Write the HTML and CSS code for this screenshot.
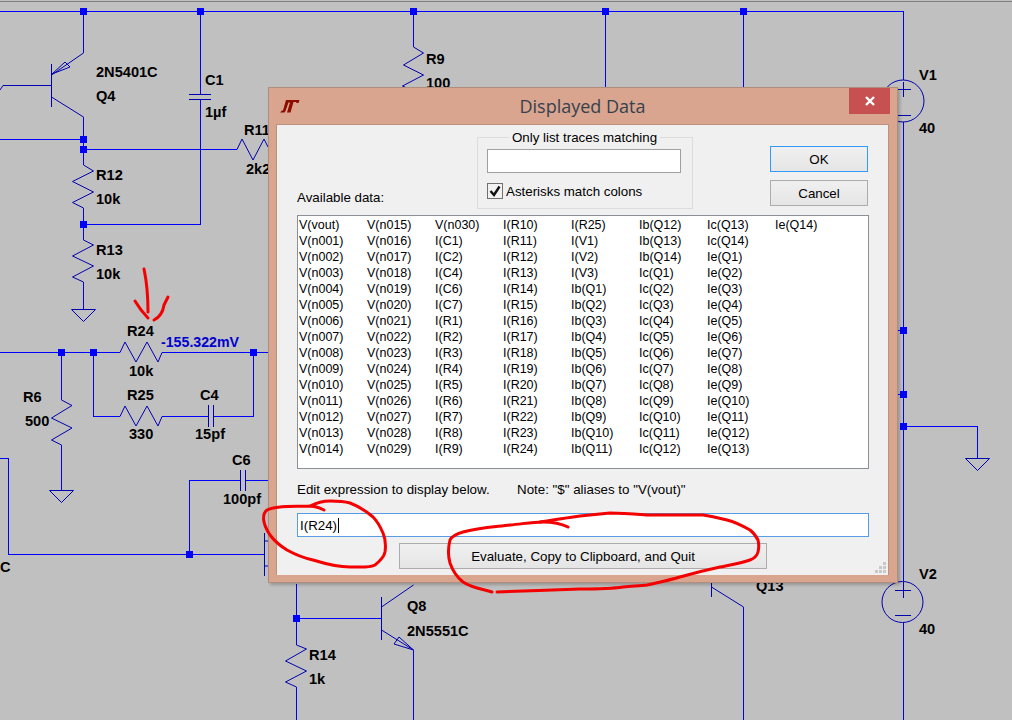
FILE: index.html
```html
<!DOCTYPE html>
<html lang="en">
<head>
<meta charset="utf-8">
<title>Displayed Data</title>
<link rel="stylesheet" href="styles.css">
</head>
<body>
<div class="desktop">
  <svg class="schematic" viewBox="0 0 1012 720" width="1012" height="720" aria-label="Circuit schematic">
    <g class="wires">
      <path d="M0 11.5H903.5V80M903.5 122V581M903.5 622V720"/>
      <path d="M83.5 11.5V53M83.5 117V149.5V165M0 139.5H83.5M83.5 149.5H237"/>
      <path d="M200.5 11.5V94M200.5 99V224.5H83.5M83.5 208V240M83.5 282V309"/>
      <path d="M413.5 11.5V47M605.5 11.5V87M743.5 11.5V87"/>
      <path d="M0 352.5H120M162 352.5H268M61.5 352.5V400M61.5 445V490"/>
      <path d="M93.5 352.5V416.5H120M162 416.5H208M213 416.5H253.5V352.5"/>
      <path d="M0 458.5H8.5V554.5H264M189.5 554.5V480.5H240M245 480.5H268"/>
      <path d="M296.5 584V645M296.5 687V720M296.5 618.5H381M413.5 650V720M743.5 607V720"/>
      <path d="M903.5 426.5H977.5V458M898 330.5H903M898 394.5H903"/>
    </g>
    <g class="junctions">
      <rect x="80" y="8" width="7" height="7"/><rect x="197" y="8" width="7" height="7"/>
      <rect x="410" y="8" width="7" height="7"/><rect x="602" y="8" width="7" height="7"/>
      <rect x="740" y="8" width="7" height="7"/><rect x="80" y="136" width="7" height="7"/>
      <rect x="80" y="146" width="7" height="7"/><rect x="80" y="221" width="7" height="7"/>
      <rect x="58" y="349" width="7" height="7"/><rect x="90" y="349" width="7" height="7"/>
      <rect x="250" y="349" width="7" height="7"/><rect x="186" y="551" width="7" height="7"/>
      <rect x="293" y="615" width="7" height="7"/><rect x="900" y="327" width="7" height="7"/>
      <rect x="900" y="391" width="7" height="7"/><rect x="900" y="423" width="7" height="7"/>
    </g>
    <g class="parts">
      <path d="M51.5 64V107M0 90L3 85.5H51.5M51.5 75L83.5 53M51.5 97L83.5 117"/>
      <path d="M52 74L70 67L65 62Z"/>
      <path d="M189 94.5H211M189 99.5H211"/>
      <path d="M83.5 165L93.5 171L72.5 181.5L93.5 192L72.5 202.5L83.5 208"/>
      <path d="M83.5 240L93.5 245L72.5 256L93.5 266L72.5 277L83.5 282"/>
      <path d="M71.5 309.5H95.5L83.5 321.5Z"/>
      <path d="M237 149.5L242 139L253 160L264 139L268 147"/>
      <path d="M413.5 47L423.5 53L403.5 65L423.5 75L402.5 86L413 91"/>
      <path d="M120 352.5L125 342L136 362L147 342L158 362L162 352.5"/>
      <path d="M120 416.5L125 406L136 426L147 406L158 426L162 416.5"/>
      <path d="M208.5 405V427M213.5 405V427"/>
      <path d="M61.5 400L72 405.5L51.5 418L72 428L51.5 440L61.5 445"/>
      <path d="M49.5 490.5H73.5L61.5 502.5Z"/>
      <path d="M240.5 470V491M245.5 470V491"/>
      <path d="M264.5 533V576M264.5 541H268M264.5 566H268"/>
      <path d="M381.5 597V640M381.5 607L413.5 585M381.5 630L413.5 650M413.5 650L394 644L399 637Z"/>
      <path d="M296.5 645L306.5 649L285.5 661L306.5 671L285.5 682L296.5 687"/>
      <path d="M711.5 583V597M711.5 587L743.5 607"/>
      <circle cx="903" cy="101" r="21"/>
      <path d="M895 89.5H911M895 115.5H911M903.5 82V97"/>
      <circle cx="902.5" cy="602" r="20.5"/>
      <path d="M895 590.5H911M895 615.5H911M903.5 582V598"/>
      <path d="M965.5 458.5H989.5L977.5 470.5Z"/>
    </g>
    <g class="labels">
      <text x="96" y="77">2N5401C</text><text x="96" y="101">Q4</text>
      <text x="205" y="85">C1</text><text x="205" y="117">1µf</text>
      <text x="244" y="135">R11</text><text x="246" y="174">2k2</text>
      <text x="96" y="180">R12</text><text x="96" y="204">10k</text>
      <text x="96" y="255">R13</text><text x="96" y="279">10k</text>
      <text x="426" y="64">R9</text><text x="426" y="88">100</text>
      <text x="127" y="336">R24</text><text x="129" y="376">10k</text>
      <text x="127" y="400">R25</text><text x="129" y="439">330</text>
      <text x="200" y="400">C4</text><text x="195" y="439">15pf</text>
      <text x="23" y="402">R6</text><text x="25" y="426">500</text>
      <text x="232" y="465">C6</text><text x="223" y="504">100pf</text>
      <text x="0" y="572">C</text>
      <text x="407" y="611">Q8</text><text x="407" y="636">2N5551C</text>
      <text x="309" y="660">R14</text><text x="309" y="684">1k</text>
      <text x="756" y="591">Q13</text>
      <text x="919" y="80">V1</text><text x="919" y="133">40</text>
      <text x="919" y="579">V2</text><text x="919" y="634">40</text>
      <text class="probe" x="161" y="347">-155.322mV</text>
    </g>
  </svg>

  <section class="dialog">
    <header class="titlebar">
      <svg class="logo" viewBox="0 0 20 15" width="20" height="15" aria-hidden="true">
        <path d="M0 13.5L2 11.5H3L6 1H19.5L18.5 4H16.5L16 3H13.5L10.5 13.5H7L10 3.5H8.5L5.5 12L4.5 13.5Z"/>
      </svg>
      <h1 class="title">Displayed Data</h1>
      <div class="close">
        <svg viewBox="0 0 10 10" width="10" height="10" aria-hidden="true"><path d="M1 1L9 9M9 1L1 9"/></svg>
      </div>
    </header>
    <main class="client">
      <div class="top">
        <div class="avail">Available data:</div>
        <fieldset class="filter">
          <legend>Only list traces matching</legend>
          <input class="filter-input" type="text" aria-label="Only list traces matching">
          <label class="check">
            <span class="box"><svg viewBox="0 0 14 14" width="14" height="14" aria-hidden="true"><path d="M2.5 7L6 11L11.5 2.5"/></svg></span>
            <span>Asterisks match colons</span>
          </label>
        </fieldset>
        <div class="actions">
          <button class="btn btn-default" type="button">OK</button>
          <button class="btn" type="button">Cancel</button>
        </div>
      </div>
      <div class="list">
        <span>V(vout)</span><span>V(n001)</span><span>V(n002)</span><span>V(n003)</span><span>V(n004)</span><span>V(n005)</span><span>V(n006)</span><span>V(n007)</span><span>V(n008)</span><span>V(n009)</span><span>V(n010)</span><span>V(n011)</span><span>V(n012)</span><span>V(n013)</span><span>V(n014)</span>
        <span>V(n015)</span><span>V(n016)</span><span>V(n017)</span><span>V(n018)</span><span>V(n019)</span><span>V(n020)</span><span>V(n021)</span><span>V(n022)</span><span>V(n023)</span><span>V(n024)</span><span>V(n025)</span><span>V(n026)</span><span>V(n027)</span><span>V(n028)</span><span>V(n029)</span>
        <span>V(n030)</span><span>I(C1)</span><span>I(C2)</span><span>I(C4)</span><span>I(C6)</span><span>I(C7)</span><span>I(R1)</span><span>I(R2)</span><span>I(R3)</span><span>I(R4)</span><span>I(R5)</span><span>I(R6)</span><span>I(R7)</span><span>I(R8)</span><span>I(R9)</span>
        <span>I(R10)</span><span>I(R11)</span><span>I(R12)</span><span>I(R13)</span><span>I(R14)</span><span>I(R15)</span><span>I(R16)</span><span>I(R17)</span><span>I(R18)</span><span>I(R19)</span><span>I(R20)</span><span>I(R21)</span><span>I(R22)</span><span>I(R23)</span><span>I(R24)</span>
        <span>I(R25)</span><span>I(V1)</span><span>I(V2)</span><span>I(V3)</span><span>Ib(Q1)</span><span>Ib(Q2)</span><span>Ib(Q3)</span><span>Ib(Q4)</span><span>Ib(Q5)</span><span>Ib(Q6)</span><span>Ib(Q7)</span><span>Ib(Q8)</span><span>Ib(Q9)</span><span>Ib(Q10)</span><span>Ib(Q11)</span>
        <span>Ib(Q12)</span><span>Ib(Q13)</span><span>Ib(Q14)</span><span>Ic(Q1)</span><span>Ic(Q2)</span><span>Ic(Q3)</span><span>Ic(Q4)</span><span>Ic(Q5)</span><span>Ic(Q6)</span><span>Ic(Q7)</span><span>Ic(Q8)</span><span>Ic(Q9)</span><span>Ic(Q10)</span><span>Ic(Q11)</span><span>Ic(Q12)</span>
        <span>Ic(Q13)</span><span>Ic(Q14)</span><span>Ie(Q1)</span><span>Ie(Q2)</span><span>Ie(Q3)</span><span>Ie(Q4)</span><span>Ie(Q5)</span><span>Ie(Q6)</span><span>Ie(Q7)</span><span>Ie(Q8)</span><span>Ie(Q9)</span><span>Ie(Q10)</span><span>Ie(Q11)</span><span>Ie(Q12)</span><span>Ie(Q13)</span>
        <span>Ie(Q14)</span>
      </div>
      <div class="hint">
        <span class="hint-left">Edit expression to display below.</span>
        <span>Note: "$" aliases to "V(vout)"</span>
      </div>
      <div class="expr">I(R24)<span class="caret"></span></div>
      <button class="btn btn-wide" type="button">Evaluate, Copy to Clipboard, and Quit</button>
      <svg class="grip" viewBox="0 0 11 11" width="11" height="11" aria-hidden="true">
        <path d="M8 0h3v3H8zM4 4h3v3H4zM8 4h3v3H8zM0 8h3v3H0zM4 8h3v3H4zM8 8h3v3H8z"/>
      </svg>
    </main>
  </section>

  <svg class="marks" viewBox="0 0 1012 720" width="1012" height="720" aria-hidden="true">
    <path d="M144 269C147 283 148 297 148 312"/>
    <path d="M135 301C138 306 142 312 148 318"/>
    <path d="M154 320C160 317 163 312 164 305L168 297"/>
    <path d="M324 510C318 507 314 506 310 506C296 507 278 505 267 510C262 514 262 523 270 535C276 543 282 547 287 550C296 555 304 558 313 560C326 564 338 567 350 567C360 567 370 568 375 565C380 561 384 557 385 552C386 545 386 540 383 533C380 526 378 522 373 517C366 511 358 506 350 503C343 501 336 501 330 501C322 501 316 503 310 506"/>
    <path d="M568 527C560 523 552 522 543 522C532 522 522 524 510 525C494 527 478 528 463 532C456 534 452 536 450 540C448 548 448 556 450 563C453 572 458 578 463 582C472 588 482 589 492 592"/>
    <path d="M497 592C525 591 552 590 580 589C595 589 610 589 623 587C632 586 640 586 647 585C660 582 670 580 680 577C694 573 706 570 720 567C730 565 742 563 750 560C755 558 757 556 758 552C759 548 759 544 758 540C756 536 754 533 750 530C743 526 735 522 727 520C719 518 711 516 703 515C685 515 665 515 647 515C634 514 622 513 610 513C600 514 590 515 580 516C566 518 552 520 540 522"/>
  </svg>
</div>
</body>
</html>
```
FILE: styles.css
```css
* { box-sizing: border-box; }
html, body { margin: 0; padding: 0; }
body { background: #c0c0c0; }

.desktop {
  position: relative;
  width: 1012px;
  height: 720px;
  overflow: hidden;
  background: #c0c0c0;
  box-shadow: inset 0 1px 0 #c0c0c0, inset 0 2px 0 #808080;
  font-family: "Liberation Sans", Arial, sans-serif;
}

.schematic, .marks { position: absolute; left: 0; top: 0; display: block; }
.schematic { font-family: "Liberation Sans", Arial, sans-serif; }
.wires path { fill: none; stroke: #0000ff; stroke-width: 1; shape-rendering: crispEdges; }
.junctions rect { fill: #0000ff; shape-rendering: crispEdges; }
.parts path, .parts circle { fill: none; stroke: #0000b0; stroke-width: 1; }
.labels text { font-size: 14.6px; font-weight: 700; fill: #000; }
.labels .probe { font-size: 14.2px; fill: #0000d0; }

.marks { pointer-events: none; }
.marks path { fill: none; stroke: #f40000; stroke-width: 3; stroke-linecap: round; stroke-linejoin: round; }

.dialog {
  position: absolute;
  left: 268px;
  top: 87px;
  width: 630px;
  height: 496px;
  padding: 0 8px 7px 7px;
  display: flex;
  flex-direction: column;
  background: #d9a58e;
  border: 1px solid #b08d7c;
  box-shadow: 2px 2px 3px rgba(0, 0, 0, .22);
}

.titlebar {
  height: 36px;
  flex: none;
  display: grid;
  grid-template-columns: 1fr auto 1fr;
  align-items: start;
}
.logo { margin: 11px 0 0 4px; display: block; }
.logo path { fill: #8c0c00; }
.title {
  margin: 6px 0 0;
  font: 400 18px/24px "Open Sans", "Noto Sans", sans-serif;
  color: #35414e;
}
.close {
  justify-self: end;
  width: 41px;
  height: 26px;
  margin-right: -1px;
  display: flex;
  align-items: center;
  justify-content: center;
  background: #c75050;
}
.close path { fill: none; stroke: #fff; stroke-width: 2.4; }

.client {
  position: relative;
  flex: 1;
  padding: 0 20px 0 20px;
  background: #f0f0f0;
  border: 1px solid #bb927d;
  border-bottom: 0;
  font-size: 13.33px;
  line-height: 15px;
  color: #000;
}

.top { height: 90px; display: flex; }
.avail { width: 180px; align-self: flex-end; margin-bottom: 10px; }
.filter {
  width: 216px;
  height: 79px;
  margin: 5px 0 0;
  padding: 4px 10px 0 9px;
  border: 1px solid #dcdcdc;
  min-width: 0;
}
.filter legend { margin: 0 auto; padding: 0 3px; white-space: nowrap; }
.filter-input {
  display: block;
  width: 194px;
  height: 24px;
  padding: 0;
  background: #fff;
  border: 1px solid #a0a0a0;
  outline: 0;
}
.check { margin-top: 10px; display: flex; align-items: center; gap: 3px; }
.box {
  width: 16px;
  height: 16px;
  display: block;
  background: #f2f2f2;
  border: 1px solid #707070;
}
.box svg { display: block; }
.box path { fill: none; stroke: #111; stroke-width: 2.4; }

.actions { margin: 21px 0 0 77px; display: flex; flex-direction: column; gap: 8px; }
.btn {
  height: 26px;
  padding: 0;
  font: inherit;
  color: #000;
  background: linear-gradient(#f0f0f0, #e5e5e5);
  border: 1px solid #acacac;
  border-radius: 0;
}
.actions .btn { width: 98px; }
.btn-default { border-color: #3399ff; }
.btn-wide { display: block; width: 368px; margin: 6px 0 0 102px; }

.list {
  height: 254px;
  width: 572px;
  padding: 1px 0 0 1px;
  display: grid;
  grid-auto-flow: column;
  grid-template-rows: repeat(15, 16px);
  grid-auto-columns: 68px;
  background: #fff;
  border: 1px solid #8a8f98;
  font-size: 12.5px;
  line-height: 16px;
}

.hint { margin-top: 13px; height: 16px; display: flex; line-height: 16px; }
.hint-left { width: 220px; }

.expr {
  margin-top: 15px;
  width: 572px;
  height: 24px;
  padding: 0 0 0 2px;
  display: flex;
  align-items: center;
  background: #fff;
  border: 1px solid #569de5;
}
.caret { width: 1px; height: 15px; margin-left: 1px; background: #000; }

.grip { position: absolute; right: 2px; bottom: 2px; display: block; }
.grip path { fill: #c8c8c8; }
```
